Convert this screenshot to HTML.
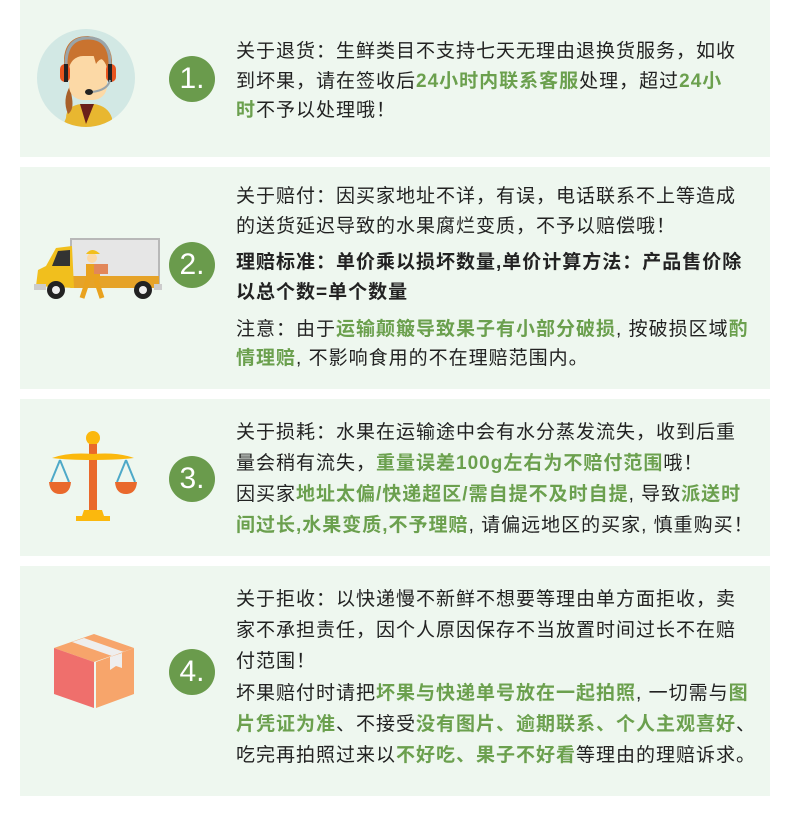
<!DOCTYPE html>
<html><head><meta charset="utf-8"><style>
*{margin:0;padding:0;box-sizing:border-box}
body{width:790px;height:836px;background:#fff;position:relative;overflow:hidden;font-family:"Liberation Sans","Noto Sans CJK SC",sans-serif;color:#222}
.p{position:absolute;left:20px;width:750px;background:#eef7ef}
.c{position:absolute;left:169px;width:46px;height:46px;border-radius:50%;background:#6a9b4c;color:#fff;font-size:30px;line-height:46px;text-align:center;font-family:"Liberation Sans",sans-serif}
.l{position:absolute;left:236px;font-size:19px;letter-spacing:1px;line-height:28px;white-space:nowrap}
.g{color:#6ba04e;font-weight:bold}
.b{font-weight:bold}
</style></head><body>
<div class="p" style="top:0;height:157px"></div>
<div class="p" style="top:167px;height:222px"></div>
<div class="p" style="top:399px;height:157px"></div>
<div class="p" style="top:566px;height:230px"></div>

<svg style="position:absolute;left:36px;top:28px" width="100" height="100" viewBox="0 0 100 100">
<defs><clipPath id="cc"><circle cx="50" cy="50" r="49"/></clipPath></defs>
<circle cx="50" cy="50" r="49" fill="#d2e8e4"/>
<g clip-path="url(#cc)">
<path d="M30 90 Q30 78 45 76 L58 76 Q72 78 76 90 L76 100 L26 100Z" fill="#e8b730"/>
<path d="M44 76 L50 96 L58 76Z" fill="#6a1f1a"/>
<path d="M28 30 Q30 8 52 8 Q74 10 76 32 L76 52 L28 52Z" fill="#c9732f"/>
<path d="M34 58 Q26 72 32 86 Q38 82 36 70Z" fill="#a8602a"/>
<rect x="33" y="28" width="38" height="44" rx="14" fill="#fcd9a6"/>
<path d="M32 34 Q40 22 56 22 L60 36 Q66 26 74 36 L74 24 Q68 12 50 12 Q32 14 30 30Z" fill="#c9732f"/>
<path d="M30 36 Q30 10 52 10 Q74 10 74 36" fill="none" stroke="#9aa4a8" stroke-width="3"/>
<rect x="24" y="36" width="10" height="18" rx="5" fill="#e8541e"/><rect x="28" y="36" width="4" height="18" fill="#222"/>
<rect x="70" y="36" width="10" height="18" rx="5" fill="#e8541e"/><rect x="72" y="36" width="4" height="18" fill="#222"/>
<path d="M74 52 Q72 62 56 64" fill="none" stroke="#9aa4a8" stroke-width="2"/>
<ellipse cx="53" cy="64" rx="4" ry="3" fill="#222"/>
</g></svg>
<div class="c" style="top:56px">1.</div>

<svg style="position:absolute;left:34px;top:236px" width="130" height="64" viewBox="0 0 130 64">
<rect x="37" y="3" width="88" height="48" fill="#e6e6e6" stroke="#b8b8b8" stroke-width="2"/>
<rect x="37" y="40" width="88" height="12" fill="#e6a328"/>
<path d="M38 10 L22 12 L12 30 L4 34 L2 50 L40 52Z" fill="#f1bf1d"/>
<path d="M36 14 L24 15 L18 30 L36 30Z" fill="#333"/>
<rect x="0" y="48" width="12" height="6" fill="#ccc"/><rect x="120" y="48" width="8" height="6" fill="#ccc"/>
<circle cx="22" cy="54" r="9" fill="#222"/><circle cx="22" cy="54" r="4" fill="#eee"/>
<circle cx="109" cy="54" r="9" fill="#222"/><circle cx="109" cy="54" r="4" fill="#eee"/>
<circle cx="58" cy="22" r="5" fill="#fcd9a6"/><path d="M52 18 Q58 10 66 18Z" fill="#f1bf1d"/>
<path d="M52 28 L66 28 L66 44 L52 44Z" fill="#e9a21f"/>
<path d="M54 44 L48 62 M62 44 L68 62" stroke="#e9a21f" stroke-width="5"/>
<rect x="60" y="28" width="14" height="10" fill="#e2875a"/>
</svg>
<div class="c" style="top:242px">2.</div>

<svg style="position:absolute;left:48px;top:430px" width="90" height="92" viewBox="0 0 90 92">
<circle cx="45" cy="8" r="7" fill="#fbb80d"/>
<rect x="41" y="14" width="8" height="66" fill="#e9692c"/>
<path d="M4 28 Q20 22 45 24 Q70 22 86 28 Q70 30 45 30 Q20 30 4 28Z" fill="#fbb80d"/>
<path d="M12 30 L3 52 M12 30 L21 52 M78 30 L69 52 M78 30 L87 52" stroke="#4ea9c8" stroke-width="2"/>
<path d="M1 52 L23 52 Q22 64 12 64 Q2 64 1 52Z" fill="#e9692c"/>
<path d="M67 52 L89 52 Q88 64 78 64 Q68 64 67 52Z" fill="#e9692c"/>
<path d="M36 80 L54 80 L56 86 L34 86Z" fill="#fbb80d"/><rect x="28" y="86" width="34" height="5" fill="#fbb80d"/>
</svg>
<div class="c" style="top:456px">3.</div>

<svg style="position:absolute;left:52px;top:626px" width="84" height="84" viewBox="0 0 84 84">
<path d="M2 22 L42 8 L82 22 L42 36Z" fill="#f7a56b"/>
<path d="M20 16 L60 30 L72 26 L32 12Z" fill="#eee"/>
<path d="M2 22 L42 36 L42 82 L2 68Z" fill="#ef6f6c"/>
<path d="M44 36 L82 22 L82 68 L44 82Z" fill="#f7a56b"/>
<path d="M58 31 L70 27 L70 42 L64 40 L58 44Z" fill="#eee"/>
</svg>
<div class="c" style="top:649px">4.</div>

<div class="l" style="top:38px">关于退货：生鲜类目不支持七天无理由退换货服务，如收</div>
<div class="l" style="top:68px">到坏果，请在签收后<span class="g">24小时内联系客服</span>处理，超过<span class="g">24小</span></div>
<div class="l" style="top:97px"><span class="g">时</span>不予以处理哦！</div>

<div class="l" style="top:183px">关于赔付：因买家地址不详，有误，电话联系不上等造成</div>
<div class="l" style="top:213px">的送货延迟导致的水果腐烂变质，不予以赔偿哦！</div>
<div class="l b" style="top:249px">理赔标准：单价乘以损坏数量,单价计算方法：产品售价除</div>
<div class="l b" style="top:279px">以总个数=单个数量</div>
<div class="l" style="top:316px">注意：由于<span class="g">运输颠簸导致果子有小部分破损</span>, 按破损区域<span class="g">酌</span></div>
<div class="l" style="top:345px"><span class="g">情理赔</span>, 不影响食用的不在理赔范围内。</div>

<div class="l" style="top:419px">关于损耗：水果在运输途中会有水分蒸发流失，收到后重</div>
<div class="l" style="top:450px">量会稍有流失，<span class="g">重量误差100g左右为不赔付范围</span>哦！</div>
<div class="l" style="top:481px">因买家<span class="g">地址太偏/快递超区/需自提不及时自提</span>, 导致<span class="g">派送时</span></div>
<div class="l" style="top:512px"><span class="g">间过长,水果变质,不予理赔</span>, 请偏远地区的买家, 慎重购买！</div>

<div class="l" style="top:586px">关于拒收：以快递慢不新鲜不想要等理由单方面拒收，卖</div>
<div class="l" style="top:617px">家不承担责任，因个人原因保存不当放置时间过长不在赔</div>
<div class="l" style="top:648px">付范围！</div>
<div class="l" style="top:680px">坏果赔付时请把<span class="g">坏果与快递单号放在一起拍照</span>, 一切需与<span class="g">图</span></div>
<div class="l" style="top:711px"><span class="g">片凭证为准</span>、不接受<span class="g">没有图片、逾期联系、个人主观喜好</span>、</div>
<div class="l" style="top:742px">吃完再拍照过来以<span class="g">不好吃、果子不好看</span>等理由的理赔诉求。</div>
</body></html>
